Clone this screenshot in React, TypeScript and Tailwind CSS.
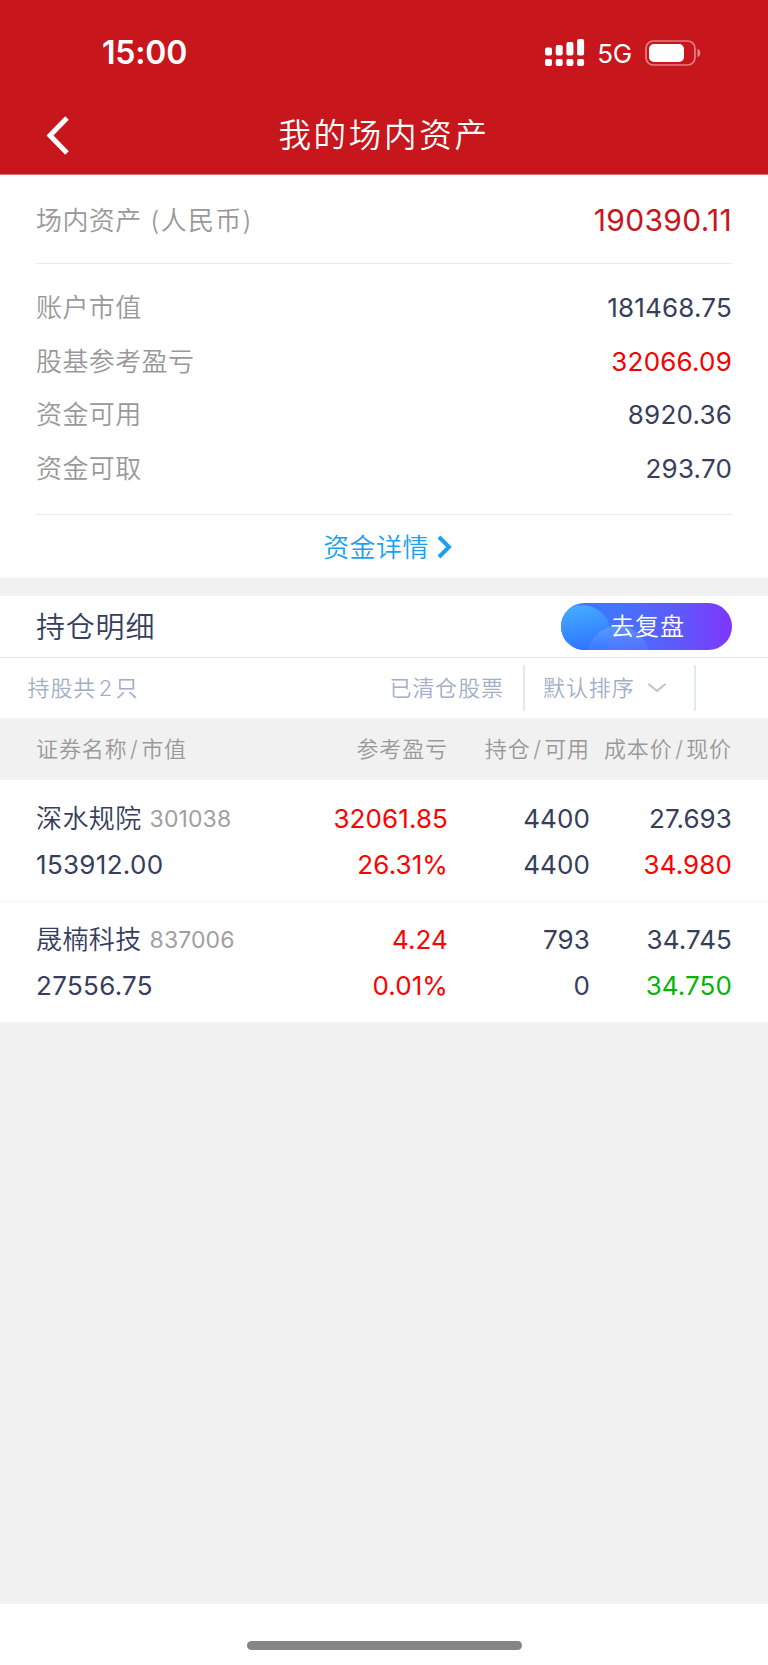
import React from 'react';

interface AccountRow {
  label: string;
  value: string;
  color: string;
}

interface Holding {
  name: string;
  code: string;
  marketValue: string;
  profit: string;
  profitRate: string;
  position: string;
  available: string;
  cost: string;
  price: string;
  priceColor: string;
}

const accountRows: AccountRow[] = [
  { label: '账户市值', value: '181468.75', color: 'text-[#373e5c]' },
  { label: '股基参考盈亏', value: '32066.09', color: 'text-[#f50000]' },
  { label: '资金可用', value: '8920.36', color: 'text-[#373e5c]' },
  { label: '资金可取', value: '293.70', color: 'text-[#373e5c]' },
];

const holdings: Holding[] = [
  {
    name: '深水规院',
    code: '301038',
    marketValue: '153912.00',
    profit: '32061.85',
    profitRate: '26.31%',
    position: '4400',
    available: '4400',
    cost: '27.693',
    price: '34.980',
    priceColor: 'text-[#ff0000]',
  },
  {
    name: '晟楠科技',
    code: '837006',
    marketValue: '27556.75',
    profit: '4.24',
    profitRate: '0.01%',
    position: '793',
    available: '0',
    cost: '34.745',
    price: '34.750',
    priceColor: 'text-[#08b408]',
  },
];

const StatusBar = () => (
  <div className="flex h-[104px] items-center justify-between pt-px pr-[67px] pl-[102px]">
    <span className="pt-px text-[32px] leading-none font-semibold tracking-[-0.2px]">15:00</span>
    <div className="flex items-center">
      <svg width="40" height="28" viewBox="0 0 40 28" fill="#fff">
        <rect x="0" y="8.5" width="7" height="8" rx="2" />
        <rect x="10.700" y="6" width="7" height="10.5" rx="2" />
        <rect x="21.4" y="3" width="7" height="13.5" rx="2" />
        <rect x="32.1" y="0" width="7" height="16.5" rx="2" />
        <rect x="0" y="20" width="7" height="7" rx="2" />
        <rect x="10.700" y="20" width="7" height="7" rx="2" />
        <rect x="21.4" y="20" width="7" height="7" rx="2" />
        <rect x="32.1" y="20" width="7" height="7" rx="2" />
      </svg>
      <span className="ml-[12px] pt-[2px] text-[26px] leading-none font-[430] tracking-[-0.2px]">5G</span>
      <svg className="ml-[13px]" width="56" height="26" viewBox="0 0 56 26" fill="none">
        <rect x="1" y="1" width="49" height="24" rx="7.5" stroke="#fff" strokeOpacity="0.45" strokeWidth="1.7" />
        <rect x="4" y="4" width="35" height="18" rx="5" fill="#fff" />
        <path d="M52.5 8.8c1.8.8 2.8 2.4 2.8 4.2s-1 3.400-2.800 4.200z" fill="#fff" fillOpacity="0.5" />
      </svg>
    </div>
  </div>
);

const ReviewButton = () => (
  <button className="relative h-[47px] w-[171px] overflow-hidden rounded-full">
    <svg className="absolute inset-0" width="171" height="47" viewBox="0 0 171 47">
      <defs>
        <linearGradient id="pill" x1="0" y1="0" x2="1" y2="0">
          <stop offset="0" stopColor="#2f7dff" />
          <stop offset="0.35" stopColor="#4672ff" />
          <stop offset="0.7" stopColor="#5f58fa" />
          <stop offset="1" stopColor="#7f36fb" />
        </linearGradient>
        <linearGradient id="bubble" x1="0" y1="0" x2="0.2" y2="1">
          <stop offset="0" stopColor="#47b2ff" />
          <stop offset="0.85" stopColor="#2e74ff" />
        </linearGradient>
        <linearGradient id="wave" x1="0" y1="0" x2="0" y2="1">
          <stop offset="0" stopColor="#66a0ff" stopOpacity="0.75" />
          <stop offset="0.4" stopColor="#5a84ff" stopOpacity="0.3" />
        </linearGradient>
      </defs>
      <rect width="171" height="47" fill="url(#pill)" />
      <circle cx="21" cy="31" r="29" fill="url(#bubble)" />
      <circle cx="57" cy="54" r="31" fill="url(#wave)" />
    </svg>
    <span className="relative pl-[2px] text-[24px] leading-[47px] font-[350] tracking-[0.8px] text-white">去复盘</span>
  </button>
);

const Slash = () => <span className="mx-[2.500px]">/</span>;

const HoldingRow = ({ item }: { item: Holding }) => (
  <div className="grid h-[121.500px] grid-cols-[1fr_150px_142px_142px] border-b border-[#f5f5f5] px-9 pt-[15.500px] text-[26px] leading-[46.400px] tracking-[0.1px] text-[#373e5c]">
    <div className="whitespace-nowrap">
      <div className="flex h-[46.400px]">
        <span className="font-[350] tracking-[0.4px]">{item.name}</span>
        <span className="ml-2 text-[23px] text-[#a0a0a0]">{item.code}</span>
      </div>
      <div className="tracking-[0.3px]">{item.marketValue}</div>
    </div>
    <div className="text-right text-[#ff0000]">
      <div>{item.profit}</div>
      <div>{item.profitRate}</div>
    </div>
    <div className="text-right">
      <div>{item.position}</div>
      <div>{item.available}</div>
    </div>
    <div className="text-right">
      <div>{item.cost}</div>
      <div className={item.priceColor}>{item.price}</div>
    </div>
  </div>
);

export default function App() {
  return (
    <div className="flex h-[1665px] w-[768px] flex-col overflow-hidden bg-[#f1f1f1] font-['Inter','Noto_Sans_CJK_SC',sans-serif]">
      <header className="h-[175px] border-b border-[#dc6f73] bg-[#c7161c] text-white">
        <StatusBar />
        <div className="grid h-[62px] grid-cols-[100px_1fr_100px] items-center">
          <svg className="ml-[45px]" width="26" height="40" viewBox="0 0 26 40" fill="none" stroke="#fff" strokeWidth="5">
            <path d="M22 3 5 20.500 22 38" />
          </svg>
          <h1 className="pt-[2px] text-center text-[32.500px] leading-none font-[350] tracking-[2.700px]">我的场内资产</h1>
        </div>
      </header>

      {/* 资产概览 */}
      <section className="h-[403px] bg-white px-9">
        <div className="flex h-[89px] items-center justify-between border-b border-[#e9e9e9] pt-[2px]">
          <span className="text-[26px] font-[350] tracking-[0.4px] text-[#999]">
            场内资产 <span className="ml-px tracking-[1.3px]">(人民币)</span>
          </span>
          <span className="text-[30px] font-[380] tracking-[0.3px] text-[#c7161c]">190390.11</span>
        </div>
        <div className="flex h-[251px] flex-col border-b border-[#e9e9e9] pt-[17px]">
          {accountRows.map((row) => (
            <div key={row.label} className="flex h-[53.500px] items-center justify-between text-[26px]">
              <span className="font-[350] tracking-[0.4px] text-[#999]">{row.label}</span>
              <span className={`tracking-[0.2px] ${row.color}`}>{row.value}</span>
            </div>
          ))}
        </div>
        <a className="flex h-[63px] items-center justify-center pt-px pl-[8px] text-[26px] font-[350] tracking-[0.4px] text-[#1ba1f0]">
          资金详情
          <svg className="ml-[8px]" width="16" height="24" viewBox="0 0 16 24" fill="none" stroke="currentColor" strokeWidth="4">
            <path d="M2 2 12 12 2 22" />
          </svg>
        </a>
      </section>

      {/* 持仓明细 */}
      <section className="mt-[18px] bg-white">
        <div className="flex h-[62px] items-center justify-between border-b border-[#e1e5ef] px-9">
          <h2 className="pt-[3px] text-[29px] font-[350] tracking-[0.8px] text-[#373e5c]">持仓明细</h2>
          <ReviewButton />
        </div>
        <div className="flex h-[60px] items-center pl-[27.500px] text-[22px] font-[350] tracking-[0.9px] text-[#a3aec8]">
          <span>
            持股共<span className="mx-[2.500px]">2</span>只
          </span>
          <span className="ml-auto pr-[19px]">已清仓股票</span>
          <div className="flex h-[46px] w-[173px] items-center border-x-2 border-[#e4e8f1] pl-[18px]">
            默认排序
            <svg className="ml-[12px]" width="20" height="12" viewBox="0 0 20 12" fill="none" stroke="#c0c2c8" strokeWidth="2">
              <path d="M1.500 2 10 9 18.500 2" />
            </svg>
          </div>
          <div className="w-[72px]" />
        </div>
        <div className="grid h-[62px] grid-cols-[1fr_150px_142px_142px] items-center bg-[#f1f1f1] px-9 text-[22px] font-[350] tracking-[0.9px] whitespace-nowrap text-[#999]">
          <span>
            证券名称
            <Slash />
            市值
          </span>
          <span className="text-right">参考盈亏</span>
          <span className="text-right">
            持仓
            <Slash />
            可用
          </span>
          <span className="text-right">
            成本价
            <Slash />
            现价
          </span>
        </div>
        {holdings.map((item) => (
          <HoldingRow key={item.code} item={item} />
        ))}
      </section>

      <footer className="mt-auto flex h-[61px] justify-center bg-white pt-[37px]">
        <div className="h-[9px] w-[275px] rounded-full bg-[#858585]" />
      </footer>
    </div>
  );
}
